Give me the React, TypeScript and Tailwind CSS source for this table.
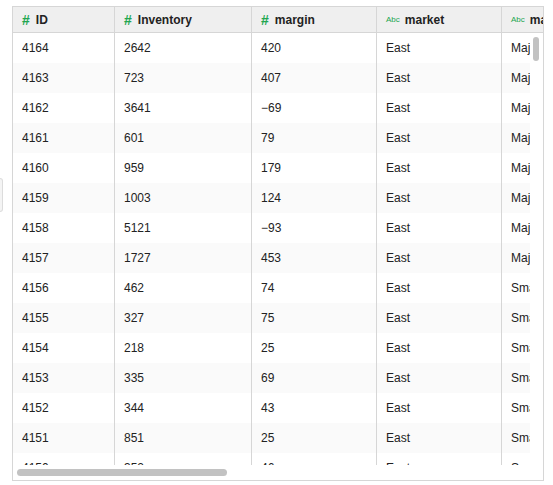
const rows: [string, string, string, string, string][] = [
  ["4164", "2642", "420", "East", "Major Market"],
  ["4163", "723", "407", "East", "Major Market"],
  ["4162", "3641", "−69", "East", "Major Market"],
  ["4161", "601", "79", "East", "Major Market"],
  ["4160", "959", "179", "East", "Major Market"],
  ["4159", "1003", "124", "East", "Major Market"],
  ["4158", "5121", "−93", "East", "Major Market"],
  ["4157", "1727", "453", "East", "Major Market"],
  ["4156", "462", "74", "East", "Small Market"],
  ["4155", "327", "75", "East", "Small Market"],
  ["4154", "218", "25", "East", "Small Market"],
  ["4153", "335", "69", "East", "Small Market"],
  ["4152", "344", "43", "East", "Small Market"],
  ["4151", "851", "25", "East", "Small Market"],
  ["4150", "352", "46", "East", "Small Market"],
];

const widths = ["w-[102px]", "w-[137px]", "w-[125px]", "w-[125px]", "w-[140px]"];

const NumIcon = () => (
  <span className="mr-[6px] text-[14px] font-bold leading-none text-[#21a64f]">#</span>
);

const TextIcon = () => (
  <span className="mr-[5px] text-[8px] font-normal leading-none text-[#21a64f]">Abc</span>
);

const headers = [
  { label: "ID", num: true },
  { label: "Inventory", num: true },
  { label: "margin", num: true },
  { label: "market", num: false },
  { label: "market_size", num: false },
];

export default function App() {
  return (
    <div className="relative h-[485px] w-[553px] bg-white pl-[12px] pt-[6px] font-['Liberation_Sans',Arial,sans-serif] text-[12px] text-[#222]">
      <div className="absolute left-0 top-[178px] h-[34px] w-[3px] rounded-r-sm border border-l-0 border-[#dcdcdc] bg-[#f4f4f4]" />
      <div className="relative flex h-[475px] w-[532px] flex-col overflow-hidden border border-[#d6d6d6] bg-white">
        <div className="flex h-[26px] shrink-0 overflow-hidden border-b border-[#d6d6d6] bg-[#efefef]">
          {headers.map((h, i) => (
            <div
              key={h.label}
              className={`${widths[i]} flex shrink-0 items-center border-r border-[#d6d6d6] pl-[9px] font-bold whitespace-nowrap`}
            >
              {h.num ? <NumIcon /> : <TextIcon />}
              {h.label}
            </div>
          ))}
        </div>
        <div className="h-[432px] w-[517px] overflow-hidden">
          {rows.map((r, ri) => (
            <div key={r[0]} className={`flex h-[30px] ${ri % 2 === 1 ? "bg-[#fafafa]" : "bg-white"}`}>
              {r.map((c, ci) => (
                <div
                  key={ci}
                  className={`${widths[ci]} flex shrink-0 items-center border-r border-[#d6d6d6] pl-[9px] whitespace-nowrap`}
                >
                  {c}
                </div>
              ))}
            </div>
          ))}
        </div>
        <div className="flex h-[15px] shrink-0 items-center bg-white pl-[4px]">
          <div className="h-[7px] w-[210px] rounded-full bg-[#c2c2c2]" />
        </div>
        <div className="absolute right-[4px] top-[30px] h-[24px] w-[6px] rounded-full bg-[#c2c2c2]" />
      </div>
    </div>
  );
}
